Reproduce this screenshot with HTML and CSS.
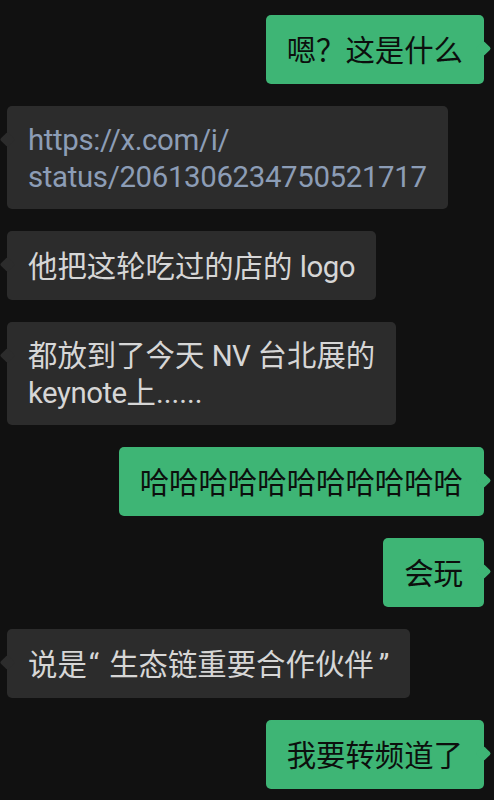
FILE: index.html
```html
<!DOCTYPE html>
<html lang="zh">
<head>
    <meta charset="UTF-8">
    <meta name="viewport" content="width=device-width, initial-scale=1.0">
    <title>聊天记录</title>
    <link rel="stylesheet" href="styles.css">
</head>
<body>
    <div class="chat">
        <div class="msg me"><div class="bubble"><span>嗯？这是什么</span></div></div>
        <div class="msg other"><div class="bubble"><span class="link">https://x.com/i/<br>status/2061306234750521717</span></div></div>
        <div class="msg other"><div class="bubble"><span>他把这轮吃过的店的 <span class="latin">logo</span></span></div></div>
        <div class="msg other"><div class="bubble"><span>都放到了今天 <span class="latin">NV</span> 台北展的<br><span class="latin">keynote</span>上......</span></div></div>
        <div class="msg me"><div class="bubble"><span>哈哈哈哈哈哈哈哈哈哈哈</span></div></div>
        <div class="msg me"><div class="bubble"><span>会玩</span></div></div>
        <div class="msg other"><div class="bubble"><span>说是<span class="quote-open">“</span>生态链重要合作伙伴<span class="quote-close">”</span></span></div></div>
        <div class="msg me"><div class="bubble"><span>我要转频道了</span></div></div>
    </div>
</body>
</html>
```

FILE: styles.css
```css
body {
    margin: 0;
    background: #111111;
    font-family: Roboto, "Noto Sans CJK SC", sans-serif;
    font-size: 29.4px;
}
.chat {
    display: flex;
    flex-direction: column;
    gap: 22px;
    padding: 15px 10px 20px 7px;
}
.msg {
    display: flex;
}
.msg.me {
    justify-content: flex-end;
}
.bubble {
    position: relative;
    box-sizing: border-box;
    max-width: 470px;
    min-height: 69px;
    padding: 16px 21px 13px;
    line-height: 37px;
    border-radius: 5px;
    display: flex;
    align-items: center;
}
.bubble::before {
    content: "";
    position: absolute;
    top: 28px;
    width: 11px;
    height: 11px;
    border-radius: 2px;
    transform: rotate(45deg);
}
.other .bubble {
    background: #2c2c2c;
    color: #d6d6d6;
}
.other .bubble::before {
    left: -5px;
    background: #2c2c2c;
}
.me .bubble {
    background: #3eb575;
    color: #0c0f0d;
}
.me .bubble::before {
    right: -5px;
    background: #3eb575;
}
.link {
    color: #8c9db6;
    letter-spacing: -0.35px;
}
.latin {
    letter-spacing: -0.5px;
}
.quote-open {
    padding: 0 10px 0 2px;
}
.quote-close {
    padding: 0 0 0 5px;
}
```
